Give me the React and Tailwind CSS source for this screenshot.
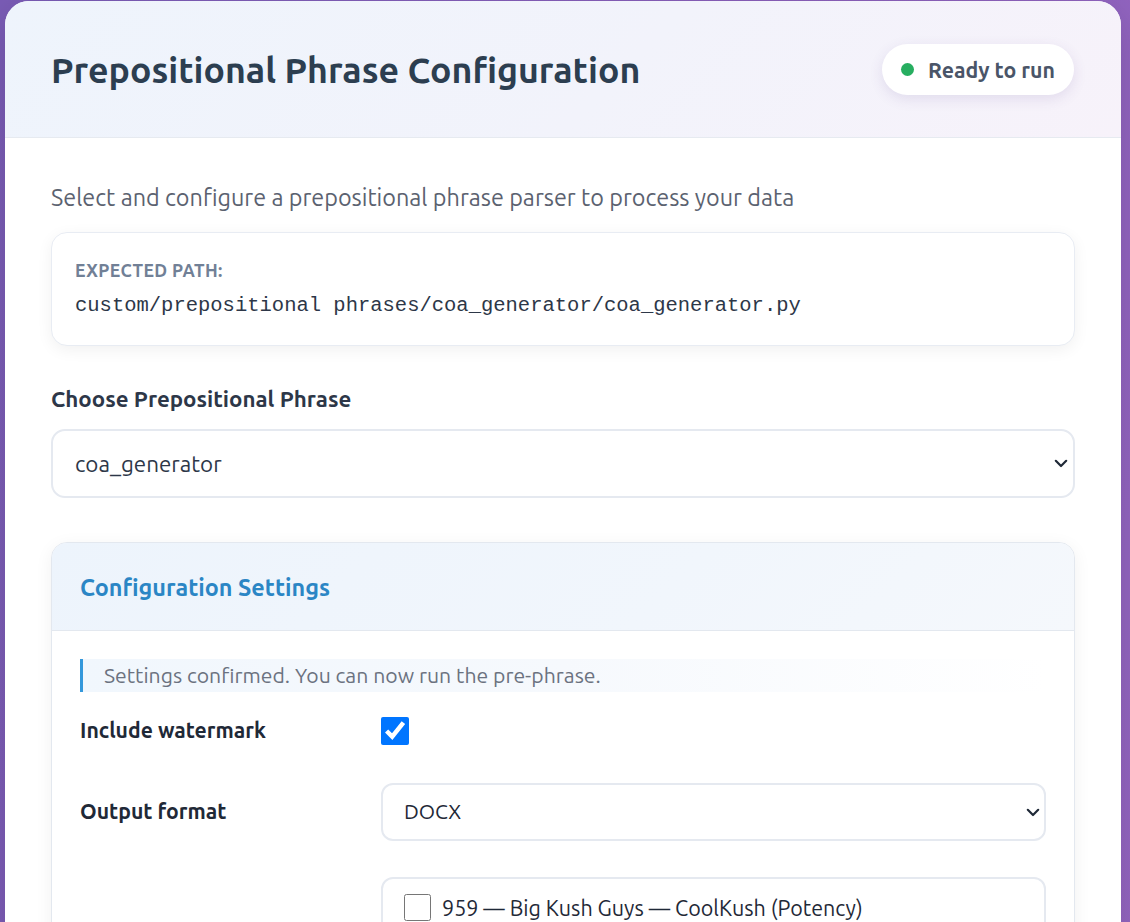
import React from "react";

function Chevron({ className }) {
  return (
    <svg className={className} width="14" height="9" viewBox="0 0 14 9" fill="none">
      <path d="M1.8 1.8 L7 7 L12.2 1.8" stroke="#1f2937" strokeWidth="2.2" strokeLinecap="round" strokeLinejoin="round" />
    </svg>
  );
}

export default function App() {
  return (
    <div className="min-h-[922px] w-full overflow-hidden bg-[linear-gradient(100deg,#7a5cb6_0%,#8a60bb_60%,#9566c2_100%)] pt-px pl-[5px] font-['Ubuntu','Noto_Sans',sans-serif]">
      <div className="w-[1116px] min-h-[921px] rounded-t-[24px] bg-white overflow-hidden shadow-[0_10px_40px_rgba(0,0,0,0.15)]">
        {/* Header */}
        <div className="h-[137px] px-[46px] flex items-center justify-between border-b border-[#e6eaf0] bg-[linear-gradient(135deg,#eef4fc_0%,#f2f3fb_55%,#f7f2fa_100%)]">
          <h1 className="pt-[4px] text-[35.7px] font-semibold text-[#2c3e50] leading-none">Prepositional Phrase Configuration</h1>
          <div className="mr-[1px] h-[51px] px-[19px] rounded-full bg-white flex items-center gap-[14px] shadow-[0_4px_14px_rgba(80,60,140,0.12)]">
            <span className="w-[13px] h-[13px] rounded-full bg-[#27ae60]"></span>
            <span className="pt-[3px] text-[21.3px] font-semibold text-[#4a5568]">Ready to run</span>
          </div>
        </div>

        {/* Body */}
        <div className="px-[46px] pt-[43px] pb-10">
          <p className="text-[23.4px] leading-[32px] text-[#5b6270]">Select and configure a prepositional phrase parser to process your data</p>

          <div className="mt-[19px] rounded-[16px] border border-[#e8ecf3] bg-white px-[23px] pt-[27px] pb-[25px] shadow-[0_4px_16px_rgba(0,0,0,0.06)]">
            <div className="text-[17.6px] leading-[22px] font-semibold tracking-[0.4px] text-[#718096]">EXPECTED PATH:</div>
            <div className="mt-[10px] font-['Liberation_Mono',monospace] text-[20.5px] leading-[28px] text-[#2d3748]">custom/prepositional phrases/coa_generator/coa_generator.py</div>
          </div>

          <div className="mt-[39px] text-[22.3px] leading-[28px] font-semibold text-[#2d3748]">Choose Prepositional Phrase</div>
          <div className="relative mt-[16px]">
            <select defaultValue="coa_generator" className="appearance-none w-full h-[69px] rounded-[14px] border-2 border-[#e5e9f0] bg-white pl-[22px] pr-[40px] text-[22.4px] text-[#2d3748]">
              <option value="coa_generator">coa_generator</option>
            </select>
            <Chevron className="pointer-events-none absolute right-[7px] top-[30px]" />
          </div>

          {/* Config card */}
          <div className="mt-[44px] rounded-[16px] border border-[#e3e8ef] bg-white overflow-hidden shadow-[0_4px_18px_rgba(0,0,0,0.06)]">
            <div className="h-[88px] px-[28px] flex items-center border-b border-[#e3e8ef] bg-[linear-gradient(135deg,#edf4fc_0%,#f1f6fc_60%,#f5f8fc_100%)]">
              <h2 className="pt-[2px] text-[23.4px] font-semibold text-[#2b86c5]">Configuration Settings</h2>
            </div>
            <div className="px-[28px] pt-[28px] pb-10">
              <div className="h-[33px] flex items-center border-l-[3px] border-[#3498db] pl-[21px] pt-[1px] text-[21.2px] text-[#6b7280] bg-[linear-gradient(90deg,#f1f7fd_0%,#f6f9fd_50%,#ffffff_100%)]">
                Settings confirmed. You can now run the pre-phrase.
              </div>

              <div className="mt-[23px] grid grid-cols-[301px_1fr] items-center gap-y-[36px]">
                <div className="text-[21.2px] font-semibold text-[#1f2937]">Include watermark</div>
                <div className="h-[28px] flex items-center">
                  <input type="checkbox" defaultChecked className="w-[28px] h-[28px] m-0" />
                </div>

                <div className="text-[21.2px] font-semibold text-[#1f2937]">Output format</div>
                <div className="relative">
                  <select defaultValue="DOCX" className="appearance-none w-full h-[58px] rounded-[12px] border-2 border-[#e5e9f0] bg-white pl-[21px] pr-[40px] text-[21px] text-[#1f2937]">
                    <option value="DOCX">DOCX</option>
                    <option value="PDF">PDF</option>
                  </select>
                  <Chevron className="pointer-events-none absolute right-[6px] top-[25px]" />
                </div>

                <div></div>
                <div className="rounded-[12px] border-2 border-[#e5e9f0] bg-white px-[21px] pt-[13px] pb-[14px]">
                  <label className="flex items-center gap-[11px] text-[21.5px] text-[#1f2937]">
                    <input type="checkbox" className="w-[27px] h-[27px] m-0" />
                    <span>959 — Big Kush Guys — CoolKush (Potency)</span>
                  </label>
                  <label className="mt-[12px] flex items-center gap-[11px] text-[21.5px] text-[#1f2937]">
                    <input type="checkbox" className="w-[27px] h-[27px] m-0" />
                    <span>960 — Big Kush Guys — CoolKush (Terpenes)</span>
                  </label>
                </div>
              </div>
            </div>
          </div>
        </div>
      </div>
    </div>
  );
}
